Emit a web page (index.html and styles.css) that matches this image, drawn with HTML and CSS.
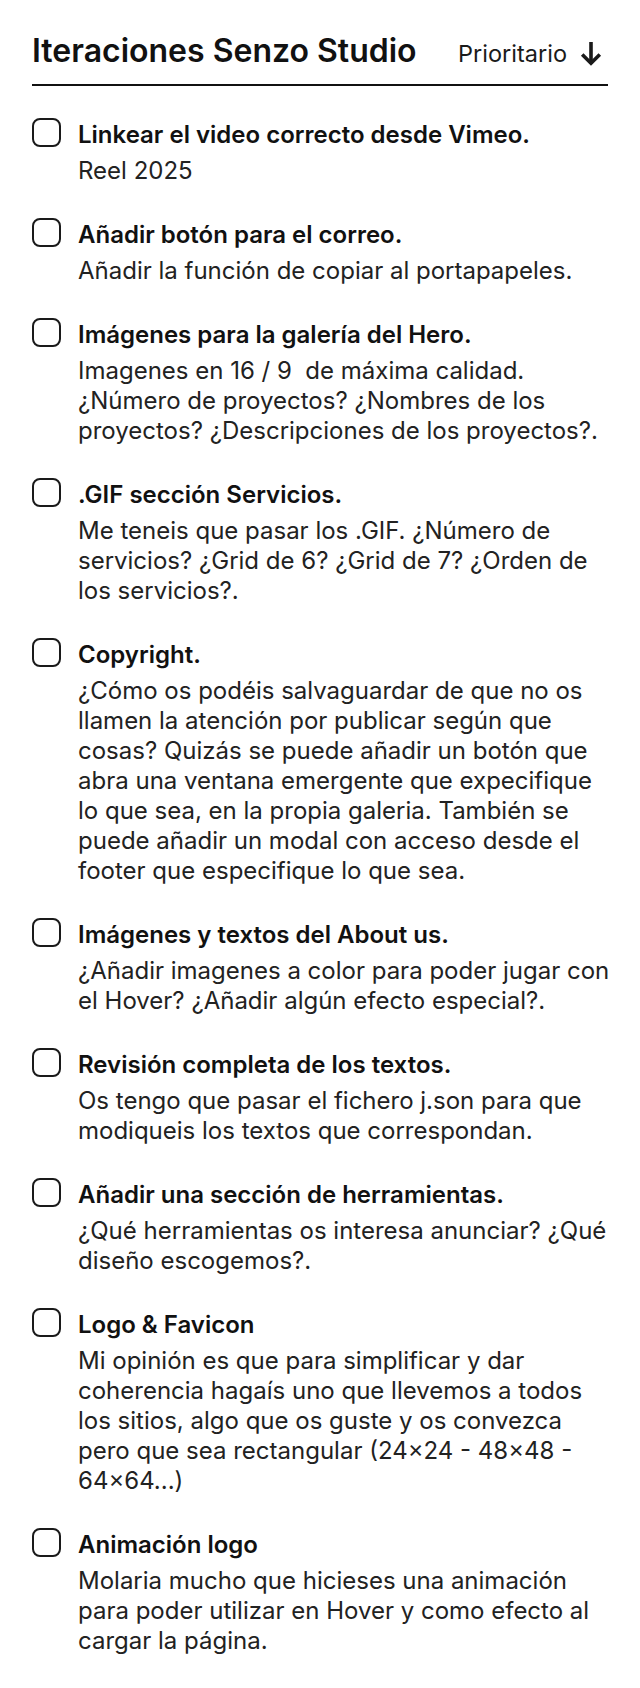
FILE: index.html
```html
<!DOCTYPE html>
<html lang="es">
<head>
<meta charset="utf-8">
<title>Iteraciones Senzo Studio</title>
<link rel="stylesheet" href="styles.css">
</head>
<body>
<main class="page">
  <header class="header">
    <h1 class="title">Iteraciones Senzo Studio</h1>
    <div class="sort">
      <span class="sort-label">Prioritario</span>
      <svg class="sort-icon" width="24" height="26" viewBox="0 0 24 26" fill="none" stroke="currentColor" stroke-width="3.6" stroke-linecap="butt" stroke-linejoin="miter"><path d="M12 1V23"/><path d="M3.2 13.4 12 22.2l8.8-8.8"/></svg>
    </div>
  </header>
  <ul class="list">
    <li class="item">
      <span class="check"></span>
      <div class="body">
        <h2 class="item-title">Linkear el video correcto desde Vimeo.</h2>
        <p class="item-desc">Reel 2025</p>
      </div>
    </li>
    <li class="item">
      <span class="check"></span>
      <div class="body">
        <h2 class="item-title">Añadir botón para el correo.</h2>
        <p class="item-desc">Añadir la función de copiar al portapapeles.</p>
      </div>
    </li>
    <li class="item">
      <span class="check"></span>
      <div class="body">
        <h2 class="item-title">Imágenes para la galería del Hero.</h2>
        <p class="item-desc">Imagenes en 16 / 9&nbsp; de máxima calidad. ¿Número de proyectos? ¿Nombres de los proyectos? ¿Descripciones de los proyectos?.</p>
      </div>
    </li>
    <li class="item">
      <span class="check"></span>
      <div class="body">
        <h2 class="item-title">.GIF sección Servicios.</h2>
        <p class="item-desc">Me teneis que pasar los .GIF. ¿Número de servicios? ¿Grid de 6? ¿Grid de 7? ¿Orden de los servicios?.</p>
      </div>
    </li>
    <li class="item">
      <span class="check"></span>
      <div class="body">
        <h2 class="item-title">Copyright.</h2>
        <p class="item-desc">¿Cómo os podéis salvaguardar de que no os llamen la atención por publicar según que cosas? Quizás se puede añadir un botón que abra una ventana emergente que expecifique lo que sea, en la propia galeria. También se puede añadir un modal con acceso desde el footer que especifique lo que sea.</p>
      </div>
    </li>
    <li class="item">
      <span class="check"></span>
      <div class="body">
        <h2 class="item-title">Imágenes y textos del About us.</h2>
        <p class="item-desc">¿Añadir imagenes a color para poder jugar con el Hover? ¿Añadir algún efecto especial?.</p>
      </div>
    </li>
    <li class="item">
      <span class="check"></span>
      <div class="body">
        <h2 class="item-title">Revisión completa de los textos.</h2>
        <p class="item-desc">Os tengo que pasar el fichero j.son para que modiqueis los textos que correspondan.</p>
      </div>
    </li>
    <li class="item">
      <span class="check"></span>
      <div class="body">
        <h2 class="item-title">Añadir una sección de herramientas.</h2>
        <p class="item-desc">¿Qué herramientas os interesa anunciar? ¿Qué diseño escogemos?.</p>
      </div>
    </li>
    <li class="item">
      <span class="check"></span>
      <div class="body">
        <h2 class="item-title">Logo &amp; Favicon</h2>
        <p class="item-desc">Mi opinión es que para simplificar y dar coherencia hagaís uno que llevemos a todos los sitios, algo que os guste y os convezca pero que sea rectangular (24×24 - 48×48 - 64×64...)</p>
      </div>
    </li>
    <li class="item">
      <span class="check"></span>
      <div class="body">
        <h2 class="item-title">Animación logo</h2>
        <p class="item-desc">Molaria mucho que hicieses una animación para poder utilizar en Hover y como efecto al cargar la página.</p>
      </div>
    </li>
  </ul>
</main>
</body>
</html>
```

FILE: styles.css
```css
* { box-sizing: border-box; }
html, body { margin: 0; padding: 0; background: #fff; }
body {
  font-family: Inter, "Noto Sans", "Liberation Sans", sans-serif;
  color: #111;
}
.page { padding: 31px 32px 32px; }
.header {
  display: flex;
  justify-content: space-between;
  align-items: baseline;
  padding-bottom: 13px;
  border-bottom: 2px solid #111;
}
.title {
  margin: 0;
  font-size: 32px;
  line-height: 40px;
  font-weight: 600;
  color: #111;
}
.sort {
  display: flex;
  align-items: center;
  gap: 12px;
  color: #1a1a1a;
}
.sort-label {
  font-size: 23.5px;
  line-height: 30px;
  font-weight: 400;
}
.sort-icon {
  display: block;
  width: 24px;
  height: 26px;
  margin-right: 5px;
}
.list {
  list-style: none;
  margin: 0;
  padding: 34px 0 0;
  display: flex;
  flex-direction: column;
  gap: 34px;
}
.item {
  display: flex;
  gap: 17px;
  align-items: flex-start;
}
.check {
  flex: none;
  width: 29px;
  height: 29px;
  border: 2px solid #1a1a1a;
  border-radius: 8px;
  margin-top: -2px;
}
.body {
  flex: 1;
  min-width: 0;
  margin-right: -8px;
}
.item-title {
  margin: 0;
  font-size: 24px;
  line-height: 30px;
  font-weight: 600;
  color: #111;
}
.item-desc {
  margin: 6px 0 0;
  font-size: 24px;
  line-height: 30px;
  font-weight: 400;
  color: #222;
}
```
